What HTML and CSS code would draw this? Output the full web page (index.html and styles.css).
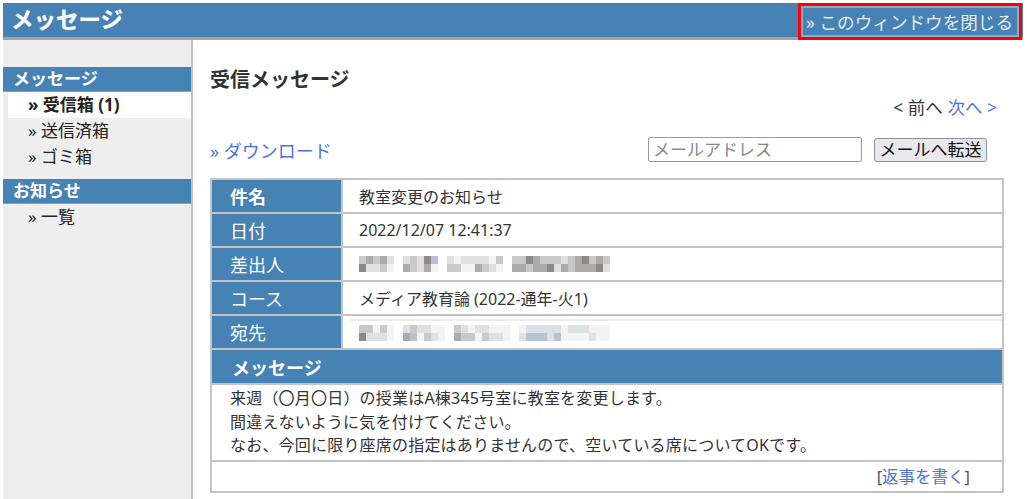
FILE: index.html
```html
<!DOCTYPE html>
<html lang="ja">
<head>
<meta charset="utf-8">
<title>メッセージ</title>
<link rel="stylesheet" href="styles.css">
</head>
<body>
<div class="page">
  <header class="topbar">
    <h1 class="title">メッセージ</h1>
    <a class="close-btn" href="#">» このウィンドウを閉じる</a>
  </header>
  <div class="layout">
    <nav class="sidebar">
      <div class="side-head">メッセージ</div>
      <ul class="side-list">
        <li class="active">» 受信箱 (1)</li>
        <li>» 送信済箱</li>
        <li>» ゴミ箱</li>
      </ul>
      <div class="side-head second">お知らせ</div>
      <ul class="side-list">
        <li>» 一覧</li>
      </ul>
    </nav>
    <main class="main">
      <h2 class="heading">受信メッセージ</h2>
      <div class="pager">&lt; 前へ <a href="#" class="link">次へ &gt;</a></div>
      <div class="toolbar">
        <a href="#" class="link download">» ダウンロード</a>
        <form class="forward">
          <input class="mail-input" type="text" placeholder="メールアドレス">
          <button class="mail-btn" type="button">メールへ転送</button>
        </form>
      </div>
      <table class="msg">
        <tr>
          <th class="label strong">件名</th>
          <td class="value">教室変更のお知らせ</td>
        </tr>
        <tr>
          <th class="label">日付</th>
          <td class="value">2022/12/07 12:41:37</td>
        </tr>
        <tr>
          <th class="label">差出人</th>
          <td class="value">
            <div class="mosaic sender">
              <div class="grp w5"><i class="c2"></i><i class="c4"></i><i class="c3"></i><i class="c1"></i><i class="c2"></i><i class="c1"></i><i class="c3"></i><i class="c2"></i><i class="c1"></i><i class="c0"></i></div>
              <div class="grp w5"><i class="c1"></i><i class="c3"></i><i class="c2"></i><i class="c2"></i><i class="c1"></i><i class="c1"></i><i class="c4"></i><i class="c3"></i><i class="c5"></i><i class="c0"></i></div>
              <div class="grp w8"><i class="c1"></i><i class="c2"></i><i class="c0"></i><i class="c2"></i><i class="c1"></i><i class="c0"></i><i class="c1"></i><i class="c0"></i><i class="c1"></i><i class="c3"></i><i class="c1"></i><i class="c2"></i><i class="c0"></i><i class="c1"></i><i class="c2"></i><i class="c0"></i></div>
              <div class="grp w14"><i class="c2"></i><i class="c3"></i><i class="c2"></i><i class="c3"></i><i class="c4"></i><i class="c2"></i><i class="c3"></i><i class="c3"></i><i class="c2"></i><i class="c3"></i><i class="c2"></i><i class="c4"></i><i class="c2"></i><i class="c1"></i><i class="c1"></i><i class="c3"></i><i class="c2"></i><i class="c2"></i><i class="c3"></i><i class="c3"></i><i class="c4"></i><i class="c3"></i><i class="c2"></i><i class="c3"></i><i class="c3"></i><i class="c4"></i><i class="c2"></i><i class="c1"></i></div>
            </div>
          </td>
        </tr>
        <tr>
          <th class="label">コース</th>
          <td class="value">メディア教育論 (2022-通年-火1)</td>
        </tr>
        <tr>
          <th class="label">宛先</th>
          <td class="value">
            <div class="mosaic dest">
              <div class="grp w5"><i class="c2"></i><i class="c4"></i><i class="c2"></i><i class="c1"></i><i class="c0"></i><i class="c1"></i><i class="c2"></i><i class="c1"></i><i class="c0"></i><i class="c0"></i></div>
              <div class="grp w6"><i class="c1"></i><i class="c3"></i><i class="c2"></i><i class="c5"></i><i class="c1"></i><i class="c0"></i><i class="c1"></i><i class="c2"></i><i class="c0"></i><i class="c1"></i><i class="c0"></i><i class="c0"></i></div>
              <div class="grp w8"><i class="c2"></i><i class="c3"></i><i class="c1"></i><i class="c2"></i><i class="c0"></i><i class="c2"></i><i class="c1"></i><i class="c0"></i><i class="c1"></i><i class="c2"></i><i class="c0"></i><i class="c1"></i><i class="c0"></i><i class="c1"></i><i class="c0"></i><i class="c0"></i></div>
              <div class="grp w13"><i class="c0"></i><i class="c1"></i><i class="c6"></i><i class="c5"></i><i class="c6"></i><i class="c5"></i><i class="c6"></i><i class="c5"></i><i class="c6"></i><i class="c1"></i><i class="c6"></i><i class="c5"></i><i class="c0"></i><i class="c0"></i><i class="c1"></i><i class="c0"></i><i class="c6"></i><i class="c0"></i><i class="c1"></i><i class="c0"></i><i class="c0"></i><i class="c1"></i><i class="c0"></i><i class="c0"></i><i class="c0"></i><i class="c0"></i></div>
            </div>
          </td>
        </tr>
        <tr>
          <th class="section" colspan="2">メッセージ</th>
        </tr>
        <tr>
          <td class="body" colspan="2">来週（〇月〇日）の授業はA棟345号室に教室を変更します。<br>間違えないように気を付けてください。<br>なお、今回に限り座席の指定はありませんので、空いている席についてOKです。</td>
        </tr>
        <tr>
          <td class="reply" colspan="2">[<a href="#" class="link">返事を書く</a>]</td>
        </tr>
      </table>
    </main>
  </div>
</div>
</body>
</html>
```

FILE: styles.css
```css
* { box-sizing: border-box; }

html, body {
  margin: 0;
  padding: 0;
  background: #ffffff;
}

body {
  font-family: "Noto Sans", "Noto Sans CJK JP", sans-serif;
  color: #333333;
  font-size: 16px;
}

.page {
  padding: 3px 4px 0 3px;
  height: 100vh;
  display: flex;
  flex-direction: column;
}

.topbar {
  display: flex;
  justify-content: space-between;
  align-items: flex-start;
  height: 37px;
  background: #4682b4;
  border-bottom: 3px solid #a3a3a3;
}

.title {
  margin: 0;
  padding-left: 8px;
  font-size: 22.5px;
  line-height: 34px;
  font-weight: bold;
  color: #ffffff;
  text-shadow: 0 0 1px rgba(255,255,255,0.6);
}

.close-btn {
  display: flex;
  align-items: center;
  height: 37px;
  width: 224px;
  margin-right: 1px;
  margin-bottom: -3px;
  padding-left: 5px;
  border: 3px solid #ff0000;
  background: #4682b4;
  box-shadow: inset 0 0 0 2px #88abcb;
  color: #e4ecf4;
  font-size: 17.6px;
  text-decoration: none;
  white-space: nowrap;
}

.layout {
  flex: 1;
  display: flex;
}

.sidebar {
  width: 190px;
  flex: none;
  background: #eeeeee;
  border-right: 2px solid #c2c2c2;
  padding-top: 27px;
}

.side-head {
  height: 25px;
  line-height: 24px;
  background: #4682b4;
  border-bottom: 1px solid #9a9a9a;
  color: #ffffff;
  font-weight: bold;
  font-size: 17px;
  padding-left: 10px;
}

.side-head.second {
  margin-top: 9px;
}

.side-list {
  list-style: none;
  margin: 0;
  padding: 0;
}

.side-list li {
  height: 26px;
  line-height: 26px;
  margin-left: 5px;
  padding-left: 20px;
  font-size: 17px;
  color: #222222;
}

.side-list li.active {
  background: #ffffff;
  font-weight: bold;
}

.main {
  flex: 1;
  padding: 26px 19px 0 17px;
}

.heading {
  margin: 0;
  font-size: 20px;
  line-height: 28px;
  font-weight: bold;
  color: #333333;
}

.pager {
  margin-top: 2px;
  text-align: right;
  padding-right: 7px;
  font-size: 17.5px;
  line-height: 22px;
}

.link {
  color: #4f72df;
  text-decoration: none;
}

.toolbar {
  margin-top: 18px;
  height: 27px;
  display: flex;
  align-items: center;
  justify-content: space-between;
}

.download {
  font-size: 18px;
}

.forward {
  display: flex;
  align-items: center;
  margin: 0 17px 0 0;
}

.mail-input {
  width: 214px;
  height: 25px;
  border: 1px solid #9a9a9a;
  border-radius: 2px;
  padding: 0 4px;
  font-family: inherit;
  font-size: 17px;
  color: #333;
}

.mail-input::placeholder {
  color: #8a8a8a;
}

.mail-btn {
  margin-left: 12px;
  width: 113px;
  height: 24px;
  padding: 0;
  border: 1px solid #8f8f9d;
  border-radius: 3px;
  background: #e9e9ed;
  font-family: inherit;
  font-size: 17px;
  line-height: 22px;
  color: #111111;
}

.msg {
  margin-top: 15px;
  width: 100%;
  border-collapse: collapse;
  border: 2px solid #c4c4c4;
}

.msg th,
.msg td {
  border: 2px solid #c4c4c4;
  padding: 0;
}

.label {
  width: 131px;
  height: 34px;
  background: #4682b4;
  color: #ffffff;
  font-size: 18px;
  font-weight: normal;
  text-align: left;
  padding-left: 18px !important;
}

.label.strong {
  font-weight: bold;
}

.value {
  height: 34px;
  padding-left: 16px !important;
  font-size: 16px;
  color: #333333;
}

.section {
  height: 35px;
  background: #4682b4;
  color: #ffffff;
  font-size: 18px;
  font-weight: bold;
  text-align: left;
  padding-left: 20px !important;
}

.body {
  padding: 2px 18px !important;
  font-size: 16px;
  line-height: 23.5px;
  letter-spacing: 0.2px;
  color: #333333;
}

.reply {
  height: 31px;
  text-align: right;
  padding-right: 32px !important;
  font-size: 16.5px;
  color: #555555;
}

.mosaic {
  display: flex;
  align-items: center;
  gap: 9px;
  height: 18px;
}

.mosaic.dest {
  margin-left: -9px;
  padding-left: 9px;
  height: 26px;
  border-top: 2px solid #ececec;
}

.grp {
  display: grid;
  grid-template-rows: 8px 8px;
  grid-auto-flow: column;
  grid-auto-columns: 7px;
  filter: blur(0.6px);
}

.grp i {
  display: block;
}

.c0 { background: #f3f3f3; }
.c1 { background: #e0e0e0; }
.c2 { background: #c9c9c9; }
.c3 { background: #ababab; }
.c4 { background: #8d8986; }
.c5 { background: #b6c2d2; }
.c6 { background: #d9e0e8; }
```
